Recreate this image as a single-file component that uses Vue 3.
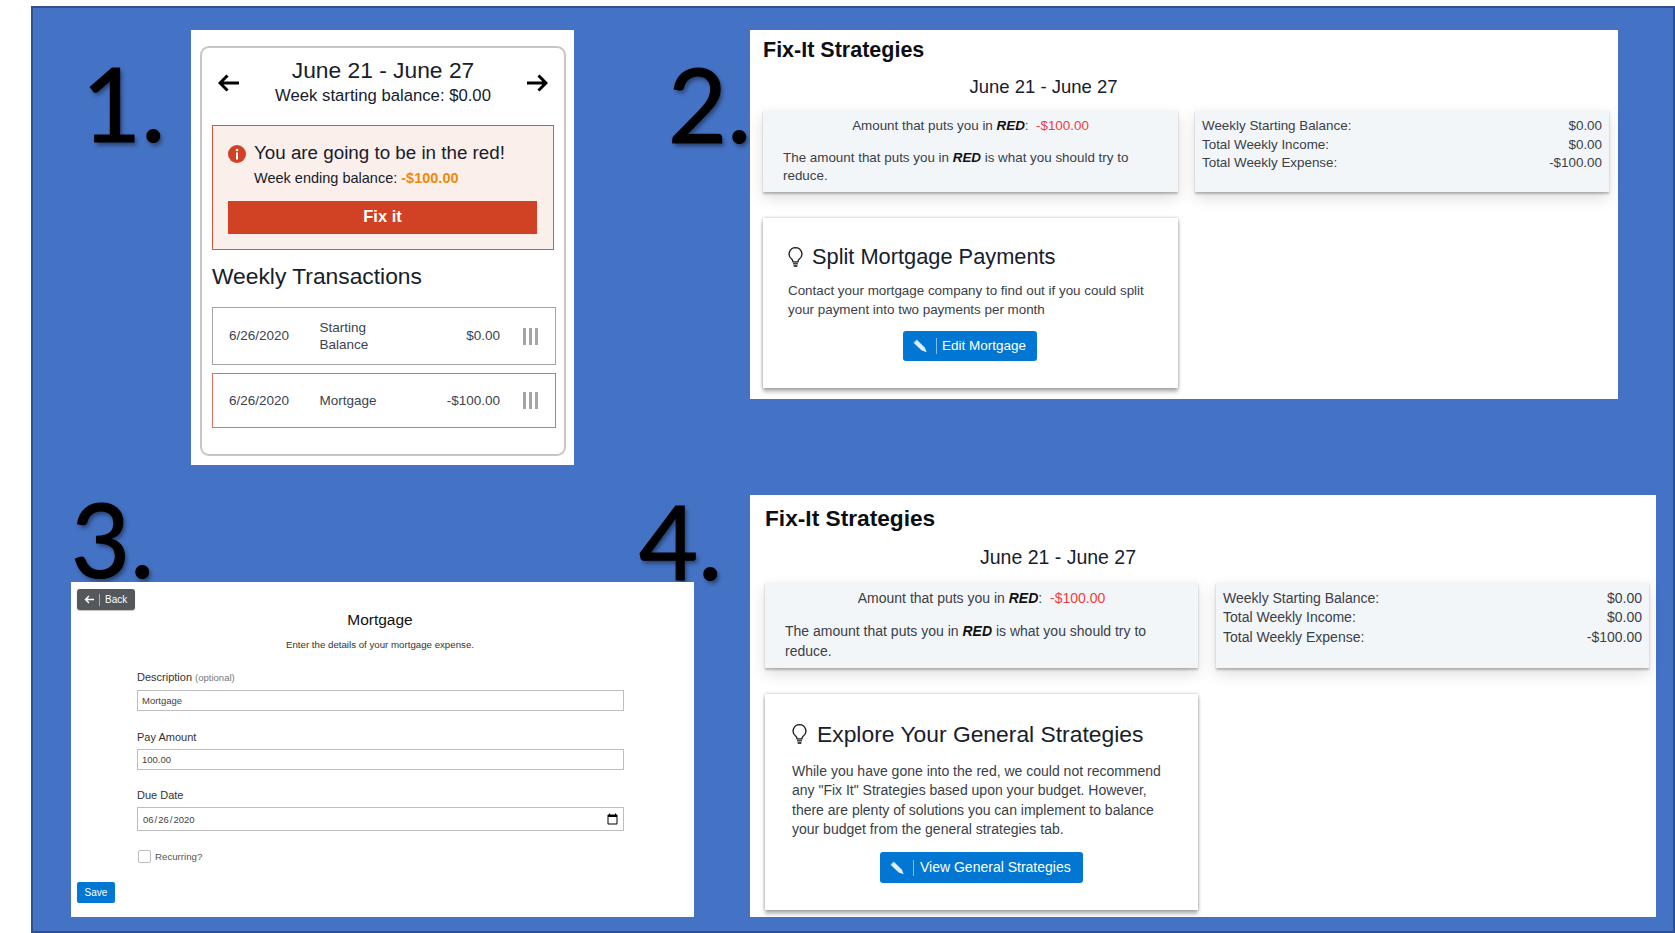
<script setup>
const transactions = [
  { date: '6/26/2020', name: 'Starting Balance', amount: '$0.00', kind: 'normal' },
  { date: '6/26/2020', name: 'Mortgage', amount: '-$100.00', kind: 'danger' }
]
const summary = [
  ['Weekly Starting Balance:', '$0.00'],
  ['Total Weekly Income:', '$0.00'],
  ['Total Weekly Expense:', '-$100.00']
]
const strategies = [
  {
    id: 'two',
    heading: 'Split Mortgage Payments',
    body: 'Contact your mortgage company to find out if you could split your payment into two payments per month',
    action: 'Edit Mortgage'
  },
  {
    id: 'four',
    heading: 'Explore Your General Strategies',
    body: 'While you have gone into the red, we could not recommend any "Fix It" Strategies based upon your budget. However, there are plenty of solutions you can implement to balance your budget from the general strategies tab.',
    action: 'View General Strategies'
  }
]
</script>

<template>
  <div class="page">
    <div class="slide"></div>

    <span class="num n1">1.</span>
    <span class="num n2">2.</span>
    <span class="num n3">3.</span>
    <span class="num n4">4.</span>

    <section class="shot one">
      <div class="frame">
        <header class="week">
          <svg class="arrow" viewBox="0 0 22 18"><path d="M21 9H2M9.500 1.500 2 9l7.500 7.500" /></svg>
          <div class="week-text">
            <div class="week-title">June 21 - June 27</div>
            <div class="week-sub">Week starting balance: $0.00</div>
          </div>
          <svg class="arrow" viewBox="0 0 22 18"><path d="M1 9h19M12.500 1.500 20 9l-7.500 7.500" /></svg>
        </header>

        <div class="alert">
          <div class="alert-head">
            <svg class="alert-icon" viewBox="0 0 18 18">
              <circle cx="9" cy="9" r="9" fill="#d14124" />
              <rect x="8" y="7.500" width="2" height="7" fill="#fff" />
              <circle cx="9" cy="5" r="1.300" fill="#fff" />
            </svg>
            <span>You are going to be in the red!</span>
          </div>
          <div class="alert-sub">Week ending balance: <b>-$100.00</b></div>
          <button class="fix">Fix it</button>
        </div>

        <h2 class="tx-title">Weekly Transactions</h2>

        <div v-for="t in transactions" :key="t.name" class="tx" :class="t.kind">
          <span class="tx-date">{{ t.date }}</span>
          <span class="tx-name">{{ t.name }}</span>
          <span class="tx-amount">{{ t.amount }}</span>
          <span class="bars"><i></i><i></i><i></i></span>
        </div>
      </div>
    </section>

    <section v-for="s in strategies" :key="s.id" class="shot strategy" :class="s.id">
      <h1 class="fix-title">Fix-It Strategies</h1>
      <div class="fix-date">June 21 - June 27</div>
      <div class="cards">
        <div class="card info">
          <div class="info-line">Amount that puts you in <b><i>RED</i></b>: &nbsp;<span class="neg">-$100.00</span></div>
          <p>The amount that puts you in <b><i>RED</i></b> is what you should try to reduce.</p>
        </div>
        <div class="card sums">
          <div v-for="row in summary" :key="row[0]" class="sum-row">
            <span>{{ row[0] }}</span><span>{{ row[1] }}</span>
          </div>
        </div>
        <div class="card tip">
          <h3>
            <svg class="bulb" viewBox="0 0 16 22">
              <path d="M8 1a6.800 6.800 0 0 0-4.100 12.200c1 .9 1.400 1.800 1.500 3h5.200c.1-1.200.5-2.100 1.500-3A6.800 6.800 0 0 0 8 1Z" fill="none" stroke="#222" stroke-width="1.500" />
              <path d="M5.400 18h5.200M6 20.600h4" stroke="#444" stroke-width="2" fill="none" />
            </svg>
            {{ s.heading }}
          </h3>
          <p>{{ s.body }}</p>
          <button class="action">
            <svg class="pencil" viewBox="0 0 14 13">
              <path d="M.800 3.600 3.800.800l7.200 7 1.800 4.500-4.700-1.700Z" fill="#fff" fill-opacity=".88" />
              <path d="M.800 3.600 3.800.800" stroke="#9cc6ea" stroke-width="1.200" />
            </svg>
            <span class="sep"></span>
            <span class="action-label">{{ s.action }}</span>
          </button>
        </div>
      </div>
    </section>

    <section class="shot three">
      <button class="back">
        <svg class="back-arrow" viewBox="0 0 10 9"><path d="M10 4.500H1.500M5 1 1.500 4.500 5 8" /></svg>
        <span class="back-sep"></span>
        Back
      </button>
      <h2 class="form-title">Mortgage</h2>
      <p class="form-sub">Enter the details of your mortgage expense.</p>
      <form class="form">
        <label>Description <small>(optional)</small></label>
        <input type="text" value="Mortgage" readonly />
        <label>Pay Amount</label>
        <input type="text" value="100.00" readonly />
        <label>Due Date</label>
        <input class="date" type="date" value="2020-06-26" />
        <div class="recurring">
          <input class="check" type="checkbox" />
          <span>Recurring?</span>
        </div>
      </form>
      <button class="save">Save</button>
    </section>
  </div>
</template>

<style>
html, body { margin: 0; background: #fff; overflow: hidden; }
</style>

<style scoped>
.page {
  position: relative;
  width: 1675px;
  height: 933px;
  overflow: hidden;
  background: #fff;
  font-family: "Liberation Sans", Arial, sans-serif;
  color: #16202c;
}
.slide {
  box-sizing: border-box;
  height: 927px;
  margin: 6px 0 0 31px;
  background: #4472c4;
  border: 2px solid #2f528f;
}
.num {
  position: absolute;
  font-family: Lato, "Open Sans", sans-serif;
  font-size: 102px;
  line-height: 120px;
  color: #000;
  -webkit-text-stroke: 1.2px #000;
  text-shadow: 2px 3px 4px rgba(0, 0, 0, .45);
}
.n1 { left: 82px; top: 43px; }
.n2 { left: 668px; top: 44px; }
.n3 { left: 71px; top: 479px; }
.n4 { left: 639px; top: 481px; }

.shot { position: absolute; background: #fff; box-sizing: border-box; }

/* 1 */
.one { left: 191px; top: 30px; width: 383px; height: 435px; padding: 16px 8px 10px 9px; }
.frame {
  box-sizing: border-box;
  height: 410px;
  border: 2px solid #c6c6c6;
  border-radius: 9px;
  padding: 8px 10px 0;
}
.week { display: flex; align-items: center; justify-content: space-between; padding: 0 6px 0 6px; }
.arrow { width: 22px; height: 18px; margin-top: 3px; fill: none; stroke: #000; stroke-width: 3; }
.week-text { text-align: center; }
.week-title { font-size: 22.800px; line-height: 28px; }
.week-sub { font-size: 16.700px; line-height: 20px; margin-top: 2px; }
.alert {
  box-sizing: border-box;
  height: 125px;
  margin-top: 19px;
  border: 1px solid #d9543c;
  background: #fbefeb;
  padding: 15px 16px 0 15px;
}
.alert-head { display: flex; align-items: center; gap: 8px; font-size: 18.800px; line-height: 24px; }
.alert-icon { width: 18px; height: 18px; flex: none; margin-top: 2px; }
.alert-sub { font-size: 14.500px; line-height: 20px; margin: 3px 0 0 26px; }
.alert-sub b { color: #ef8a0c; }
.fix {
  display: block;
  width: 100%;
  height: 33px;
  margin-top: 13px;
  padding: 0 0 2px;
  border: 0;
  background: #d14124;
  color: #fff;
  font: bold 16.500px "Liberation Sans", Arial, sans-serif;
}
.tx-title { font-size: 22.800px; line-height: 28px; font-weight: 400; margin: 12px 0 17px; }
.tx {
  box-sizing: border-box;
  display: flex;
  align-items: center;
  height: 58px;
  margin: 0 -2px 8px 0;
  padding: 0 17px 0 16px;
  border: 1.500px solid #a5a5a5;
  font-size: 13.500px;
  line-height: 17.500px;
  color: #3c4350;
}
.tx.danger { height: 55px; border-color: #e2705e; }
.tx-date { width: 90.500px; }
.tx-name { width: 80px; }
.tx-amount { flex: 1; text-align: right; }
.bars { display: flex; gap: 3px; margin-left: 23px; }
.bars i { width: 3px; height: 17px; background: #a5a5a5; }

/* 2 and 4 */
.two { left: 750px; top: 30px; width: 868px; height: 369px; padding: 7px 0 0 13px; }
.four { left: 750px; top: 495px; width: 906px; height: 422px; padding: 10px 0 0 15px; }
.fix-title { margin: 0; font-size: 21.500px; line-height: 26px; font-weight: 700; color: #0b0f14; }
.fix-date { text-align: center; font-size: 18.500px; line-height: 24px; margin-top: 12px; width: 561px; }
.cards { display: grid; grid-template-columns: 415px 414px; column-gap: 17px; row-gap: 26px; margin-top: 11px; }
.card {
  box-sizing: border-box;
  box-shadow: 0 2px 2px rgba(0, 0, 0, .25), 0 6px 14px rgba(0, 0, 0, .13);
  font-size: 13.400px;
  line-height: 18.500px;
  color: #3a4048;
}
.info, .sums { height: 82px; background: #f3f6f9; padding: 7px 7px; }
.info { padding-left: 20px; padding-right: 20px; }
.info-line { text-align: center; }
.info b { color: #111; }
.neg { color: #f03c3c; }
.info p { margin: 13px 0 0; }
.sum-row { display: flex; justify-content: space-between; }
.tip {
  height: 170px;
  padding: 26px 25px 0;
  background: #fff;
  box-shadow: 0 0 3px rgba(0, 0, 0, .28), 0 4px 4px rgba(0, 0, 0, .28);
}
.tip h3 { display: flex; align-items: center; gap: 9px; margin: 0; font-size: 21.800px; line-height: 26px; font-weight: 400; color: #16202c; }
.bulb { width: 15px; height: 22px; flex: none; }
.tip p { margin: 12px 0 12px; }
.action {
  display: flex;
  align-items: center;
  width: 134px;
  height: 30px;
  margin: 0 0 0 115px;
  padding: 0 0 0 10px;
  border: 0;
  border-radius: 3px;
  background: #0176d3;
  color: #fff;
  font: 13.500px "Liberation Sans", Arial, sans-serif;
  white-space: nowrap;
}
.action-label { margin-bottom: 2px; }
.pencil { width: 15px; height: 14px; flex: none; }
.sep { width: 1px; height: 16px; background: rgba(255, 255, 255, .5); margin: 0 5px 0 8px; }

.four .fix-title { font-size: 22.700px; }
.four .fix-date { font-size: 19.500px; margin-top: 14px; width: 586px; }
.four .cards { grid-template-columns: 433px 433px; margin-top: 13px; column-gap: 18px; row-gap: 26px; }
.four .card { font-size: 14px; line-height: 19.300px; }
.four .info, .four .sums { height: 86px; padding-top: 7px; }
.four .info p { margin-top: 14px; }
.four .tip { height: 216px; padding: 27px 27px 0; }
.four .tip h3 { font-size: 22.850px; gap: 10px; }
.four .tip p { margin: 15px 0 13px; }
.four .action { width: 203px; height: 31px; margin-left: 88px; font-size: 14px; }
.four .sep { margin-right: 6px; }

/* 3 */
.three { left: 71px; top: 582px; width: 623px; height: 335px; padding: 7px 11px 0 6px; text-align: center; }
.back {
  display: flex;
  align-items: center;
  width: 58px;
  height: 21px;
  padding: 0 0 0 7px;
  border: 0;
  border-radius: 3px;
  background: #54585c;
  color: #fff;
  font: 10px "Liberation Sans", Arial, sans-serif;
  box-shadow: 0 1px 1px rgba(0, 0, 0, .25);
}
.back-arrow { width: 10px; height: 9px; fill: none; stroke: #fff; stroke-width: 1.400; }
.back-sep { width: 1px; height: 12px; background: rgba(255, 255, 255, .5); margin: 0 5px; }
.form-title { margin: 0; font-size: 15.500px; line-height: 20px; font-weight: 400; color: #111; }
.form-sub { margin: 8px 0 0; font-size: 9.700px; line-height: 14px; color: #333; }
.form { margin: 18px 0 0 60px; width: 487px; text-align: left; display: flex; flex-direction: column; }
.form label { font-size: 11px; line-height: 14px; color: #333; margin-bottom: 5px; }
.form small { font-size: 9.500px; color: #777; }
.form input[type="text"], .form input[type="date"] {
  box-sizing: border-box;
  width: 100%;
  height: 21px;
  margin: 0 0 18.500px;
  padding: 0 4px;
  border: 1px solid #bdbdbd;
  outline: 0;
  background: #fff;
  color: #444;
  font: 9.500px "Liberation Sans", Arial, sans-serif;
}
.form input.date { height: 24px; margin-bottom: 19px; }
.date::-webkit-calendar-picker-indicator { width: 13px; height: 13px; padding: 0; margin: 0; }
.recurring { display: flex; align-items: center; gap: 4px; font-size: 9.700px; color: #555; }
.check {
  appearance: none;
  box-sizing: border-box;
  width: 13px;
  height: 13px;
  margin: 0 0 0 1px;
  border: 1px solid #bdbdbd;
  border-radius: 2px;
  background: #fff;
}
.save {
  display: block;
  width: 38px;
  height: 21px;
  margin-top: 19px;
  padding: 0;
  border: 0;
  border-radius: 2px;
  background: #0176d3;
  color: #fff;
  font: 10px "Liberation Sans", Arial, sans-serif;
}
</style>
